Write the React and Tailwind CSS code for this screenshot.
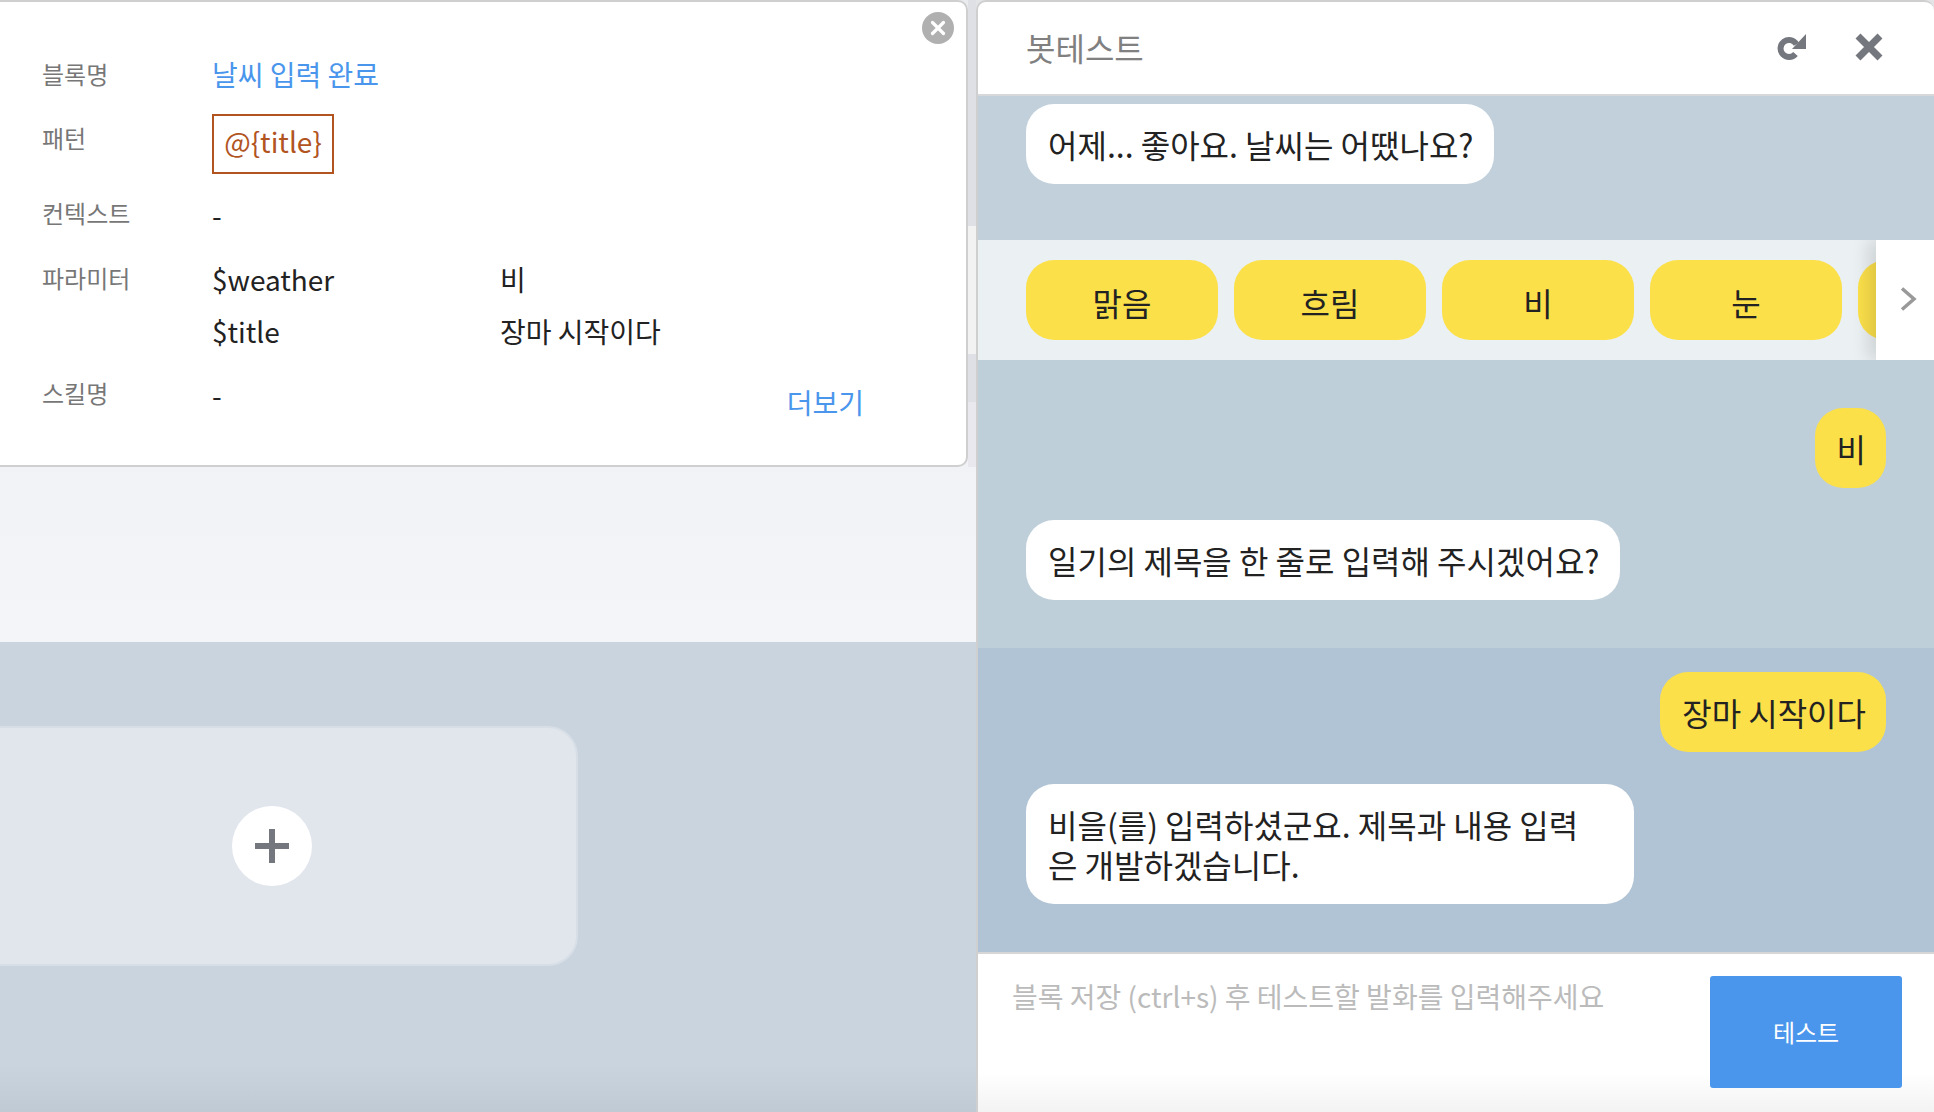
import React from 'react';
import { X } from 'lucide-react';

const font = { fontFamily: '"Noto Sans CJK KR", "Noto Sans", sans-serif' };

const Label = ({ children, className = '' }) => (
  <div className={`w-[170px] shrink-0 text-[24px] leading-[32px] text-[#777] ${className}`}>{children}</div>
);

const Bubble = ({ children, me, className = '' }) => (
  <div className={`rounded-[28px] py-[20px] pr-[20px] pl-[22px] text-[32px] leading-[40px] text-[#222] ${me ? 'bg-[#fbe04a]' : 'bg-white'} ${className}`}>
    {children}
  </div>
);

const Pill = ({ children }) => (
  <div className="flex h-[80px] w-[192px] shrink-0 items-center justify-center rounded-[28px] bg-[#fbe04a] pt-[4px] text-[32px] text-[#222]">
    {children}
  </div>
);

const App = () => {
  return (
    <div style={font} className="flex h-[1112px] w-[1934px] overflow-hidden bg-[#e3e4e6]">
      {/* editor side */}
      <div className="flex w-[976px] shrink-0 flex-col">
        <div className="h-[642px] shrink-0 bg-gradient-to-b from-[#e9ebef] to-[#f3f5f9]">
          <div className="flex h-[467px]">
            <div className="relative -ml-[40px] flex-1 rounded-[10px] border-2 border-[#cfcfcf] bg-white pt-[52px] pl-[80px]">
              <button className="absolute top-[10px] right-[12px] flex h-[32px] w-[32px] items-center justify-center rounded-full bg-[#b0b0b0]">
                <X size={22} strokeWidth={3.5} className="text-white" />
              </button>
              <div className="flex h-[40px] items-center">
                <Label>블록명</Label>
                <div className="text-[28px] text-[#4a96ec]">날씨 입력 완료</div>
              </div>
              <div className="mt-[20px] flex">
                <Label className="pt-[8px]">패턴</Label>
                <div className="flex h-[60px] w-[122px] items-center justify-center border-2 border-[#b1541f] pb-[6px] text-[28px] text-[#b1541f]">
                  @{'{'}title{'}'}
                </div>
              </div>
              <div className="mt-[23px] flex h-[36px] items-center">
                <Label className="mb-[5px]">컨텍스트</Label>
                <div className="text-[28px] text-[#222]">-</div>
              </div>
              <div className="mt-[29px] flex">
                <Label>파라미터</Label>
                <div className="-mt-[3px] grid grid-cols-[288px_1fr] gap-y-[12px] text-[28px] leading-[40px] text-[#222]">
                  <div>$weather</div>
                  <div>비</div>
                  <div>$title</div>
                  <div>장마 시작이다</div>
                </div>
              </div>
              <div className="mt-[26px] mr-[102px] flex">
                <Label>스킬명</Label>
                <div className="pt-[2px] text-[28px] leading-[32px] text-[#222]">-</div>
                <div className="mt-[5px] ml-auto text-[28px] leading-[40px] text-[#4a96ec]">더보기</div>
              </div>
            </div>
            {/* strip of the canvas behind the card */}
            <div className="flex w-[8px] shrink-0 flex-col">
              <div className="h-[226px] bg-[#dfdfe6]" />
              <div className="h-[128px] bg-[#f2f2f2]" />
              <div className="h-[48px] bg-[#dfdfe6]" />
              <div className="flex-1 bg-[#e8e8ee]" />
            </div>
          </div>
        </div>
        <div className="flex flex-1 items-start bg-gradient-to-b from-[#c9d4de] via-[#c9d4de] via-[90%] to-[#bfcad5] pt-[84px]">
          <div className="-ml-[40px] flex h-[240px] w-[618px] items-center justify-center rounded-[30px] border-2 border-[#d8dee6] bg-[#e1e6ed]">
            <button className="ml-[6px] flex h-[80px] w-[80px] items-center justify-center rounded-full bg-white">
              <svg width="34" height="34" viewBox="0 0 34 34" fill="#75777f">
                <rect x="14" y="0" width="6" height="34" />
                <rect x="0" y="14" width="34" height="6" />
              </svg>
            </button>
          </div>
        </div>
      </div>

      {/* bot test side */}
      <div className="flex flex-1 flex-col overflow-hidden rounded-t-[10px] border-t-2 border-l-2 border-[#cfcfcf] bg-white">
        <div className="flex h-[92px] shrink-0 items-center justify-between pr-[51px] pl-[48px]">
          <div className="pb-[2px] text-[32px] text-[#808080]">봇테스트</div>
          <div className="flex items-center gap-[49px] pb-[2px]">
            <svg width="29" height="26" viewBox="0 0 29 26" fill="none">
              <path d="M19.4 10.2 A8.5 8.5 0 1 0 18.5 20" stroke="#75777f" strokeWidth="6" />
              <path d="M29 0 V15 H15 Z" fill="#75777f" />
            </svg>
            <svg width="28" height="28" viewBox="0 0 28 28" fill="none" stroke="#75777f" strokeWidth="7">
              <path d="M3 3 L25 25 M25 3 L3 25" />
            </svg>
          </div>
        </div>
        <div className="h-[2px] shrink-0 bg-[#d6d8da]" />
        <div className="flex h-[144px] shrink-0 items-start bg-[#c1d0db] pt-[8px] pl-[48px]">
          <Bubble>어제... 좋아요. 날씨는 어땠나요?</Bubble>
        </div>
        <div className="relative flex h-[120px] shrink-0 items-center gap-[16px] overflow-hidden bg-[#ebf0f3] pl-[48px]">
          <Pill>맑음</Pill>
          <Pill>흐림</Pill>
          <Pill>비</Pill>
          <Pill>눈</Pill>
          <Pill>&nbsp;</Pill>
          <div className="absolute top-0 right-0 flex h-full w-[58px] items-center justify-center bg-white shadow-[-8px_0_16px_rgba(0,0,0,0.12)]">
            <svg width="17" height="24" viewBox="0 0 17 24" fill="none" stroke="#999" strokeWidth="3.5" className="mb-[2px] ml-[7px]">
              <path d="M2 1.5 L14 12 L2 22.5" />
            </svg>
          </div>
        </div>
        <div className="flex h-[288px] shrink-0 flex-col bg-[#bfcfda] pt-[48px] pr-[48px] pl-[48px]">
          <Bubble me className="self-end">비</Bubble>
          <Bubble className="mt-[32px] self-start">일기의 제목을 한 줄로 입력해 주시겠어요?</Bubble>
        </div>
        <div className="flex h-[304px] shrink-0 flex-col bg-[#b0c4d6] pt-[24px] pr-[48px] pl-[48px]">
          <Bubble me className="self-end">장마 시작이다</Bubble>
          <Bubble className="mt-[32px] w-[608px] self-start">
            비을(를) 입력하셨군요. 제목과 내용 입력
            <br />
            은 개발하겠습니다.
          </Bubble>
        </div>
        <div className="h-[2px] shrink-0 bg-[#d6d6d6]" />
        <div className="flex flex-1 justify-between bg-gradient-to-b from-white via-white via-[75%] to-[#f3f3f3] pt-[22px] pr-[32px] pl-[34px]">
          <div className="text-[28px] leading-[40px] text-[#bbb]">블록 저장 (ctrl+s) 후 테스트할 발화를 입력해주세요</div>
          <button className="h-[112px] w-[192px] rounded-[3px] bg-[#4a96ec] text-[24px] text-white">테스트</button>
        </div>
      </div>
    </div>
  );
};

export default App;
